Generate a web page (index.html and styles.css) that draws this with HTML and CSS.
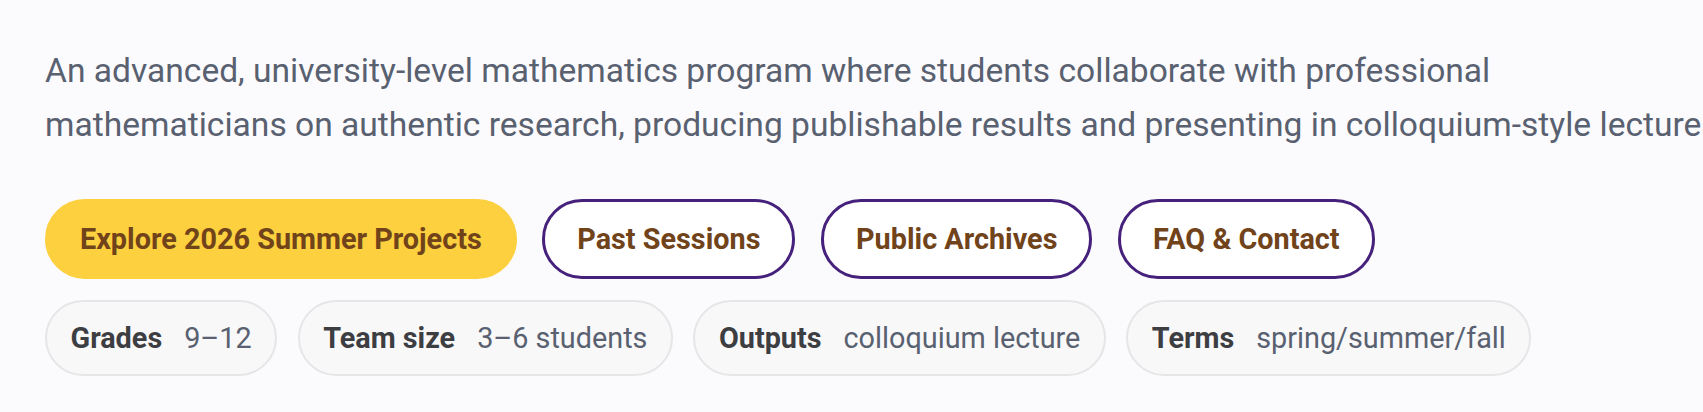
FILE: index.html
```html
<!DOCTYPE html>
<html lang="en">
<head>
<meta charset="utf-8">
<title>Research Mathematics Program</title>
<link rel="stylesheet" href="styles.css">
</head>
<body>
<section class="hero">
  <p class="lead">An advanced, university-level mathematics program where students collaborate with professional mathematicians on authentic research, producing publishable results and presenting in colloquium-style lectures.</p>
  <div class="actions">
    <a class="btn btn-primary" href="#">Explore 2026 Summer Projects</a>
    <a class="btn btn-outline" href="#">Past Sessions</a>
    <a class="btn btn-outline" href="#">Public Archives</a>
    <a class="btn btn-outline" href="#">FAQ &amp; Contact</a>
  </div>
  <ul class="facts">
    <li class="chip"><span class="chip-label">Grades</span><span class="chip-value">9–12</span></li>
    <li class="chip"><span class="chip-label">Team size</span><span class="chip-value">3–6 students</span></li>
    <li class="chip"><span class="chip-label">Outputs</span><span class="chip-value">colloquium lecture</span></li>
    <li class="chip"><span class="chip-label">Terms</span><span class="chip-value">spring/summer/fall</span></li>
  </ul>
</section>
</body>
</html>
```
FILE: styles.css
```css
html, body {
  margin: 0;
  padding: 0;
}

body {
  background: #fbfbfe;
  font-family: Roboto, "Noto Sans", "Liberation Sans", sans-serif;
  overflow: hidden;
}

.hero {
  padding: 44px 0 0 45px;
}

.lead {
  margin: 0 0 48px;
  width: 1688px;
  font-size: 33.6px;
  line-height: 53.6px;
  color: #596170;
}

.actions {
  display: flex;
  gap: 25.6px;
  margin-bottom: 21px;
}

.btn {
  box-sizing: border-box;
  display: inline-flex;
  align-items: center;
  justify-content: center;
  height: 80px;
  padding: 0 32px;
  border: 3.2px solid transparent;
  border-radius: 999px;
  font-size: 28.8px;
  font-weight: 700;
  color: #71431a;
  text-decoration: none;
  white-space: nowrap;
}

.btn-primary {
  background: #fcd03e;
  border-color: #fcd03e;
}

.btn-outline {
  background: #ffffff;
  border-color: #46217c;
}

.facts {
  display: flex;
  gap: 20.5px;
  margin: 0;
  padding: 0;
  list-style: none;
}

.chip {
  box-sizing: border-box;
  display: inline-flex;
  align-items: center;
  gap: 22px;
  height: 76px;
  padding: 0 23.5px;
  border: 2px solid #e6e6e8;
  border-radius: 999px;
  background: #f8f8f9;
  font-size: 28.8px;
  white-space: nowrap;
}

.chip-label {
  font-weight: 700;
  color: #3d3e42;
}

.chip-value {
  color: #596170;
}
```
